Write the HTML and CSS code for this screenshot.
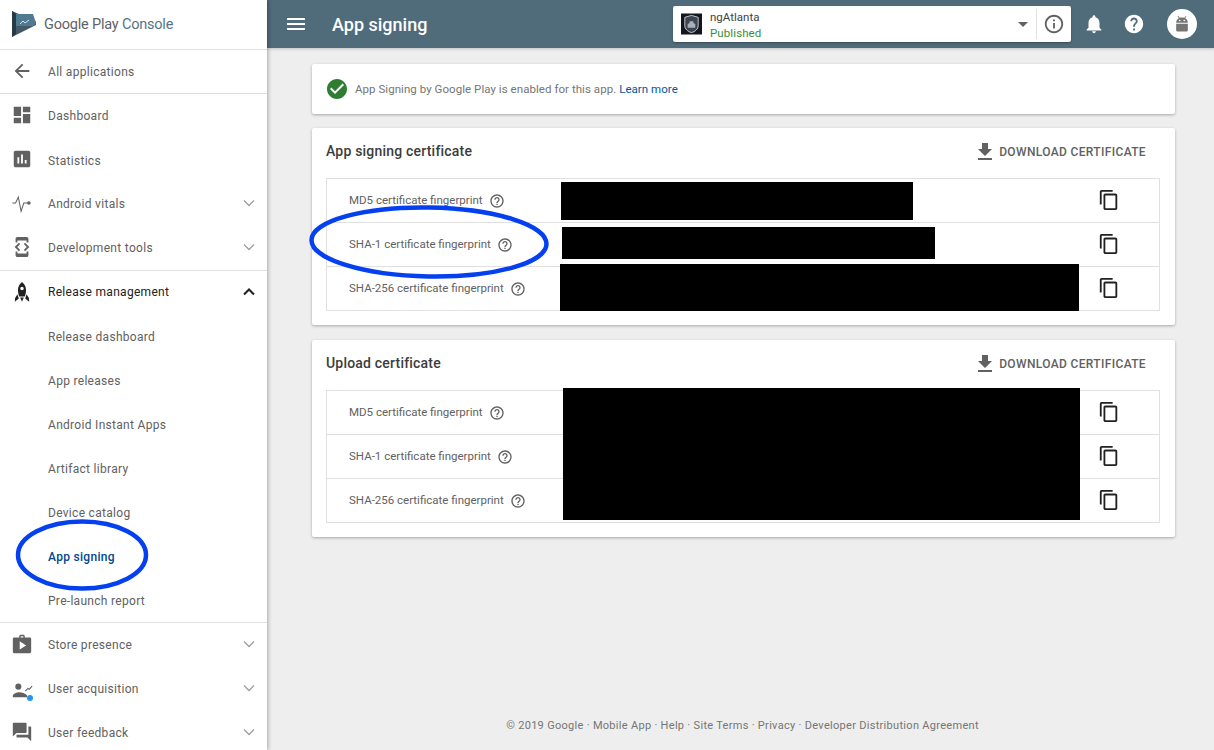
FILE: index.html
```html
<!DOCTYPE html>
<html lang="en">
<head>
    <meta charset="UTF-8">
    <meta name="viewport" content="width=device-width, initial-scale=1.0">
    <title>App signing - Google Play Console</title>
    <link rel="stylesheet" href="styles.css">
</head>
<body>
    <svg class="sprite" xmlns="http://www.w3.org/2000/svg">
        <symbol id="i-back" viewBox="0 0 24 24"><path d="M20 11H7.830l5.590-5.590L12 4l-8 8 8 8 1.410-1.410L7.830 13H20v-2z"/></symbol>
        <symbol id="i-dashboard" viewBox="0 0 24 24"><path d="M3 13h8V3H3v10zm0 8h8v-6H3v6zm10 0h8V11h-8v10zm0-18v6h8V3h-8z"/></symbol>
        <symbol id="i-stats" viewBox="0 0 24 24"><path d="M19 3H5c-1.100 0-2 .9-2 2v14c0 1.100.9 2 2 2h14c1.100 0 2-.9 2-2V5c0-1.100-.9-2-2-2zM9 17H7v-7h2v7zm4 0h-2V7h2v10zm4 0h-2v-4h2v4z"/></symbol>
        <symbol id="i-vitals" viewBox="0 0 24 24"><path d="M1.500 12H5l3-6.500L11 21l3-9h4" fill="none" stroke="currentColor" stroke-width="1.100"/><circle cx="19.500" cy="12" r="2"/></symbol>
        <symbol id="i-dev" viewBox="0 0 24 24"><path d="M7 5h10v2h2V3c0-1.100-.9-1.990-2-1.990L7 1c-1.100 0-2 .9-2 2v4h2V5zm8.410 11.590L20 12l-4.590-4.590L14 8.830 17.170 12 14 15.170l1.410 1.420zM10 15.170L6.830 12 10 8.830 8.590 7.410 4 12l4.590 4.590L10 15.170zM17 19H7v-2H5v4c0 1.100.9 2 2 2h10c1.100 0 2-.9 2-2v-4h-2v2z"/></symbol>
        <symbol id="i-rocket" viewBox="0 0 24 24"><path d="M12 1C9.200 3.300 7.600 6.300 7.600 9.800c0 2.700.6 5.400 1.400 7.200h6c.8-1.800 1.400-4.500 1.400-7.200C16.400 6.300 14.800 3.300 12 1zm0 9.200a1.900 1.900 0 1 1 0-3.800 1.900 1.900 0 0 1 0 3.800zM7 14.500 4.500 18.500l-.3 4L8.500 19zM17 14.500l2.500 4 .3 4-4.300-3.500zM10 18h4l-2 4.500z"/></symbol>
        <symbol id="i-store" viewBox="0 0 24 24"><path d="M15 5V3.500C15 2.670 14.330 2 13.500 2h-3C9.670 2 9 2.670 9 3.500V5H3.500C2.670 5 2 5.670 2 6.500v14c0 .83.67 1.500 1.500 1.500h17c.83 0 1.500-.67 1.500-1.500v-14c0-.83-.67-1.500-1.500-1.500H15zM10.500 3.500h3V5h-3V3.500zM9.500 18v-9l7 4.500-7 4.500z"/></symbol>
        <symbol id="i-users" viewBox="0 0 24 24"><circle cx="8" cy="10.500" r="3.300"/><path d="M2 22v-1.500c0-2.500 4.500-4 7-4s6.500 1 8.500 3.500V22z"/><path d="M15.500 15.500l3-3 1.500 1 3-3.500" fill="none" stroke="currentColor" stroke-width="1.200"/></symbol>
        <symbol id="i-forum" viewBox="0 0 24 24"><path d="M21 6h-2v9H6v2c0 .55.45 1 1 1h11l4 4V7c0-.55-.45-1-1-1zm-4 6V3c0-.55-.45-1-1-1H3c-.55 0-1 .45-1 1v14l4-4h10c.55 0 1-.45 1-1z"/></symbol>
        <symbol id="i-chev" viewBox="0 0 24 24"><path d="M6 9l6 6 6-6" fill="none" stroke="currentColor"/></symbol>
        <symbol id="i-menu" viewBox="0 0 24 24"><path d="M3 18h18v-2H3v2zm0-5h18v-2H3v2zm0-7v2h18V6H3z"/></symbol>
        <symbol id="i-info" viewBox="0 0 24 24"><path d="M11 17h2v-6h-2v6zm1-15C6.480 2 2 6.480 2 12s4.480 10 10 10 10-4.480 10-10S17.520 2 12 2zm0 18c-4.410 0-8-3.590-8-8s3.590-8 8-8 8 3.590 8 8-3.590 8-8 8zM11 9h2V7h-2v2z"/></symbol>
        <symbol id="i-bell" viewBox="0 0 24 24"><path d="M12 22c1.100 0 2-.9 2-2h-4c0 1.100.9 2 2 2zm6-6v-5c0-3.070-1.630-5.640-4.500-6.320V4c0-.83-.67-1.500-1.500-1.500s-1.500.67-1.500 1.500v.68C7.640 5.360 6 7.920 6 11v5l-2 2v1h16v-1l-2-2z"/></symbol>
        <symbol id="i-help" viewBox="0 0 24 24"><path d="M12 2C6.480 2 2 6.480 2 12s4.480 10 10 10 10-4.480 10-10S17.520 2 12 2zm1 17h-2v-2h2v2zm2.070-7.750l-.9.920C13.450 12.900 13 13.500 13 15h-2v-.5c0-1.100.45-2.100 1.170-2.830l1.240-1.260c.37-.36.590-.86.590-1.410 0-1.100-.9-2-2-2s-2 .9-2 2H8c0-2.210 1.790-4 4-4s4 1.790 4 4c0 .88-.36 1.680-.93 2.250z"/></symbol>
        <symbol id="i-help-o" viewBox="0 0 24 24"><path d="M11 18h2v-2h-2v2zm1-16C6.480 2 2 6.480 2 12s4.480 10 10 10 10-4.480 10-10S17.520 2 12 2zm0 18c-4.410 0-8-3.590-8-8s3.590-8 8-8 8 3.590 8 8-3.590 8-8 8zm0-14c-2.210 0-4 1.790-4 4h2c0-1.100.9-2 2-2s2 .9 2 2c0 2-3 1.750-3 5h2c0-2.250 3-2.500 3-5 0-2.210-1.790-4-4-4z"/></symbol>
        <symbol id="i-check" viewBox="0 0 24 24"><path d="M12 2C6.480 2 2 6.480 2 12s4.480 10 10 10 10-4.480 10-10S17.520 2 12 2zm-2 15l-5-5 1.410-1.410L10 14.170l7.590-7.590L19 8l-9 9z"/></symbol>
        <symbol id="i-download" viewBox="0 0 24 24"><path d="M19 9h-4V3H9v6H5l7 7 7-7zM5 18v2h14v-2H5z"/></symbol>
        <symbol id="i-copy" viewBox="0 0 24 24"><path d="M16 1H4c-1.100 0-2 .9-2 2v14h2V3h12V1zm3 4H8c-1.100 0-2 .9-2 2v14c0 1.100.9 2 2 2h11c1.100 0 2-.9 2-2V7c0-1.100-.9-2-2-2zm0 16H8V7h11v14z"/></symbol>
    </svg>

    <div class="page">
        <aside class="sidebar">
            <div class="brand">
                <svg class="brand-logo" viewBox="0 0 24 26">
                    <path d="M0 0l24 10.500v3.500L0 26z" fill="#455a64"/>
                    <path d="M4 3h17l3 9-3 3H4z" fill="#4f7a91"/>
                    <path d="M0 0l4 3v20l-4 3z" fill="#263a46"/>
                    <path d="M8 13l3-3 2 2 4-3" fill="none" stroke="#cfe3ec" stroke-width="1"/>
                </svg>
                <span class="brand-name">Google Play <span class="brand-sub">Console</span></span>
            </div>
            <a class="nav-row nav-back"><svg class="nav-icon"><use href="#i-back"/></svg>All applications</a>
            <nav class="nav-group">
                <a class="nav-row"><svg class="nav-icon"><use href="#i-dashboard"/></svg>Dashboard</a>
                <a class="nav-row nav-low"><svg class="nav-icon"><use href="#i-stats"/></svg>Statistics</a>
                <a class="nav-row"><svg class="nav-icon"><use href="#i-vitals"/></svg>Android vitals<svg class="nav-chev"><use href="#i-chev"/></svg></a>
                <a class="nav-row"><svg class="nav-icon"><use href="#i-dev"/></svg>Development tools<svg class="nav-chev"><use href="#i-chev"/></svg></a>
            </nav>
            <nav class="nav-group">
                <a class="nav-row nav-open"><svg class="nav-icon"><use href="#i-rocket"/></svg>Release management<svg class="nav-chev nav-chev-up"><use href="#i-chev"/></svg></a>
                <a class="nav-row nav-low">Release dashboard</a>
                <a class="nav-row nav-low">App releases</a>
                <a class="nav-row nav-low">Android Instant Apps</a>
                <a class="nav-row nav-low">Artifact library</a>
                <a class="nav-row nav-low">Device catalog</a>
                <a class="nav-row nav-low nav-active">App signing</a>
                <a class="nav-row nav-low">Pre-launch report</a>
            </nav>
            <nav class="nav-group">
                <a class="nav-row"><svg class="nav-icon"><use href="#i-store"/></svg>Store presence<svg class="nav-chev"><use href="#i-chev"/></svg></a>
                <a class="nav-row"><svg class="nav-icon"><use href="#i-users"/></svg><span class="nav-badge"></span>User acquisition<svg class="nav-chev"><use href="#i-chev"/></svg></a>
                <a class="nav-row"><svg class="nav-icon"><use href="#i-forum"/></svg>User feedback<svg class="nav-chev"><use href="#i-chev"/></svg></a>
            </nav>
        </aside>

        <div class="content">
            <header class="topbar">
                <svg class="top-menu"><use href="#i-menu"/></svg>
                <h1 class="top-title">App signing</h1>
                <div class="app-picker">
                    <svg class="app-logo" viewBox="0 0 22 22">
                        <rect width="22" height="22" fill="#14161c"/>
                        <path d="M4 4l7-2 7 2v9c0 3-3 6-7 7-4-1-7-4-7-7z" fill="#3c4450" stroke="#c4c8cf" stroke-width="1"/>
                        <path d="M7 15v-4l2-1v-2h4v2l2 1v4z" fill="#aab0ba"/>
                    </svg>
                    <div class="app-info">
                        <div class="app-name">ngAtlanta</div>
                        <div class="app-status">Published</div>
                    </div>
                    <span class="app-caret"></span>
                    <span class="app-info-btn"><svg class="app-info-icon"><use href="#i-info"/></svg></span>
                </div>
                <svg class="top-icon top-bell"><use href="#i-bell"/></svg>
                <svg class="top-icon"><use href="#i-help"/></svg>
                <span class="avatar">
                    <svg viewBox="0 0 24 24" class="avatar-icon">
                        <path d="M5 10.500c0-2.700 1.300-4.600 3.200-5.500L6.600 2.500l.8-.5 1.700 2.600c.9-.3 1.900-.5 2.900-.5s2 .2 2.900.5L16.600 2l.8.5L15.800 5c1.900.9 3.200 2.800 3.200 5.500z"/>
                        <path d="M5 11.700h14v7.800c0 .8-.7 1.500-1.500 1.500h-11c-.8 0-1.500-.7-1.500-1.500z"/>
                        <circle cx="9.300" cy="7.800" r="1" fill="#fff"/>
                        <circle cx="14.700" cy="7.800" r="1" fill="#fff"/>
                    </svg>
                </span>
            </header>

            <main class="main">
                <section class="card notice">
                    <svg class="notice-icon"><use href="#i-check"/></svg>
                    <span>App Signing by Google Play is enabled for this app. <a class="link">Learn more</a></span>
                </section>

                <section class="card cert">
                    <div class="cert-head">
                        <h2 class="cert-title">App signing certificate</h2>
                        <a class="cert-download"><svg class="download-icon"><use href="#i-download"/></svg>DOWNLOAD CERTIFICATE</a>
                    </div>
                    <div class="cert-table">
                        <div class="cert-row"><span class="cert-label">MD5 certificate fingerprint</span><svg class="help-icon"><use href="#i-help-o"/></svg><svg class="copy-icon"><use href="#i-copy"/></svg></div>
                        <div class="cert-row"><span class="cert-label">SHA-1 certificate fingerprint</span><svg class="help-icon"><use href="#i-help-o"/></svg><svg class="copy-icon"><use href="#i-copy"/></svg></div>
                        <div class="cert-row"><span class="cert-label">SHA-256 certificate fingerprint</span><svg class="help-icon"><use href="#i-help-o"/></svg><svg class="copy-icon"><use href="#i-copy"/></svg></div>
                        <div class="redact redact-a1"></div>
                        <div class="redact redact-a2"></div>
                        <div class="redact redact-a3"></div>
                    </div>
                </section>

                <section class="card cert">
                    <div class="cert-head">
                        <h2 class="cert-title">Upload certificate</h2>
                        <a class="cert-download"><svg class="download-icon"><use href="#i-download"/></svg>DOWNLOAD CERTIFICATE</a>
                    </div>
                    <div class="cert-table">
                        <div class="cert-row"><span class="cert-label">MD5 certificate fingerprint</span><svg class="help-icon"><use href="#i-help-o"/></svg><svg class="copy-icon"><use href="#i-copy"/></svg></div>
                        <div class="cert-row"><span class="cert-label">SHA-1 certificate fingerprint</span><svg class="help-icon"><use href="#i-help-o"/></svg><svg class="copy-icon"><use href="#i-copy"/></svg></div>
                        <div class="cert-row"><span class="cert-label">SHA-256 certificate fingerprint</span><svg class="help-icon"><use href="#i-help-o"/></svg><svg class="copy-icon"><use href="#i-copy"/></svg></div>
                        <div class="redact redact-b"></div>
                    </div>
                </section>

                <footer class="footer">© 2019 Google · Mobile App · Help · Site Terms · Privacy · Developer Distribution Agreement</footer>
            </main>
        </div>
    </div>

    <!-- hand drawn circles on top of the screenshot -->
    <svg class="circle circle-nav" viewBox="0 0 134 72"><ellipse cx="67" cy="36" rx="64" ry="33.500" /></svg>
    <svg class="circle circle-sha" viewBox="0 0 242 76"><ellipse cx="121" cy="38" rx="117.500" ry="34.500" transform="rotate(1 121 38)" /></svg>
</body>
</html>
```

FILE: styles.css
```css
*{
    box-sizing: border-box;
    margin: 0;
    padding: 0;
}
html, body{
    height: 100%;
    overflow: hidden;
}
body{
    font-family: Roboto, "Liberation Sans", sans-serif;
    font-size: 12px;
    color: #616161;
    background: #eeeeee;
}
svg{
    fill: currentColor;
    flex: none;
}
.sprite{
    display: none;
}
.page{
    display: flex;
    height: 750px;
}

/* sidebar */
.sidebar{
    width: 267px;
    flex: none;
    background: #fff;
    box-shadow: 1px 0 4px rgba(0, 0, 0, .3);
    overflow: hidden;
    z-index: 2;
}
.brand{
    height: 50px;
    display: flex;
    align-items: center;
    padding-left: 12px;
    padding-bottom: 1px;
    border-bottom: 1px solid #e0e0e0;
}
.brand-logo{
    width: 24px;
    height: 26px;
    margin-right: 8px;
}
.brand-name{
    font-size: 14.500px;
    color: #5f6368;
    letter-spacing: -.2px;
}
.brand-sub{
    color: #557487;
}
.nav-row{
    height: 44px;
    display: flex;
    align-items: center;
    padding-left: 48px;
    padding-bottom: 1px;
    position: relative;
    letter-spacing: .3px;
    color: #616161;
}
.nav-low{
    padding-bottom: 0;
    padding-top: 1px;
}
.nav-back{
    border-bottom: 1px solid #e0e0e0;
    padding-bottom: 0;
}
.nav-group{
    border-bottom: 1px solid #e0e0e0;
}
.nav-group:last-child{
    border-bottom: 0;
}
.nav-icon{
    position: absolute;
    left: 11px;
    top: 10px;
    width: 22px;
    height: 22px;
    color: #616161;
}
.nav-chev{
    width: 20px;
    height: 20px;
    position: absolute;
    right: 8px;
    top: 11px;
    color: #9e9e9e;
    stroke-width: 1.500;
}
.nav-chev-up{
    transform: rotate(180deg);
    color: #212121;
    stroke-width: 2.500;
}
.nav-open{
    height: 43px;
    color: #212121;
}
.nav-open .nav-icon{
    color: #212121;
}
.nav-active{
    color: #01478f;
    font-weight: 500;
}
.nav-badge{
    position: absolute;
    left: 27px;
    top: 28px;
    width: 6px;
    height: 6px;
    border-radius: 50%;
    background: #2196f3;
}

/* top bar */
.content{
    flex: 1;
    min-width: 0;
    display: flex;
    flex-direction: column;
}
.topbar{
    height: 48px;
    flex: none;
    background: #506b7a;
    display: flex;
    align-items: center;
    color: #fff;
    box-shadow: 0 1px 3px rgba(0, 0, 0, .2);
}
.top-menu{
    width: 24px;
    height: 24px;
    margin-left: 17px;
}
.top-title{
    font-size: 18px;
    font-weight: 500;
    margin-left: 24px;
    width: 341px;
}
.app-picker{
    width: 398px;
    height: 36px;
    background: #fff;
    border-radius: 2px;
    box-shadow: 0 1px 2px rgba(0, 0, 0, .3);
    display: flex;
    align-items: center;
    padding-left: 8px;
    color: #424242;
}
.app-logo{
    width: 21px;
    height: 22px;
}
.app-info{
    margin-left: 8px;
    font-size: 11.500px;
    line-height: 16px;
    padding-top: 2px;
    flex: 1;
}
.app-status{
    color: #388e3c;
    letter-spacing: .1px;
}
.app-caret{
    border-left: 5.500px solid transparent;
    border-right: 5.500px solid transparent;
    border-top: 5.500px solid #616161;
    margin-right: 8px;
}
.app-info-btn{
    width: 35px;
    height: 30px;
    border-left: 1px solid #e0e0e0;
    display: flex;
    align-items: center;
    justify-content: center;
}
.app-info-icon{
    width: 22px;
    height: 22px;
    color: #616161;
}
.top-icon{
    width: 22px;
    height: 22px;
    margin-left: 11px;
    margin-right: 7px;
}
.top-bell{
    margin-left: 12px;
}
.avatar{
    width: 30px;
    height: 30px;
    border-radius: 50%;
    background: #fff;
    display: flex;
    align-items: center;
    justify-content: center;
    margin-left: 15px;
    color: #757575;
}
.avatar-icon{
    width: 20px;
    height: 20px;
}

/* main column */
.main{
    flex: 1;
    display: flex;
    flex-direction: column;
    padding: 16px 39px 0 45px;
}
.card{
    background: #fff;
    border-radius: 2px;
    box-shadow: 0 1px 3px rgba(0, 0, 0, .3);
    margin-bottom: 15px;
}
.notice{
    height: 50px;
    margin-bottom: 14px;
    display: flex;
    align-items: center;
    padding-left: 13px;
    font-size: 11.500px;
    letter-spacing: .05px;
    color: #757575;
}
.notice-icon{
    width: 24px;
    height: 24px;
    color: #2e7d32;
    margin-right: 6px;
}
.link{
    color: #01579b;
}
.cert{
    height: 197px;
    padding: 0 15px 0 14px;
}
.cert-head{
    height: 50px;
    display: flex;
    align-items: center;
    justify-content: space-between;
    padding-bottom: 4px;
}
.cert-title{
    font-size: 14px;
    font-weight: 500;
    color: #3c3c3c;
    letter-spacing: .2px;
}
.cert-download{
    display: flex;
    align-items: center;
    font-size: 12px;
    font-weight: 500;
    letter-spacing: .35px;
    color: #616161;
    margin-right: 14px;
    margin-top: 2px;
}
.download-icon{
    width: 24px;
    height: 24px;
    margin-right: 2px;
}
.cert-table{
    position: relative;
    border: 1px solid #e0e0e0;
}
.cert-row{
    height: 44px;
    display: flex;
    align-items: center;
    padding-left: 22px;
    padding-right: 39px;
    font-size: 11.500px;
    color: #616161;
    border-bottom: 1px solid #e0e0e0;
}
.cert-row:nth-child(3){
    height: 43px;
    border-bottom: 0;
}
.cert-label{
    margin-bottom: 2px;
}
.help-icon{
    width: 16px;
    height: 16px;
    margin-left: 6px;
}
.copy-icon{
    width: 22px;
    height: 22px;
    margin-left: auto;
    margin-bottom: 2px;
    color: #212121;
}

/* blacked out fingerprints */
.redact{
    position: absolute;
    background: #000;
}
.redact-a1{
    left: 234px;
    top: 3px;
    width: 352px;
    height: 38px;
}
.redact-a2{
    left: 235px;
    top: 48px;
    width: 373px;
    height: 32px;
}
.redact-a3{
    left: 233px;
    top: 85px;
    width: 519px;
    height: 47px;
}
.redact-b{
    left: 236px;
    top: -3px;
    width: 517px;
    height: 132px;
}
.footer{
    margin-top: auto;
    padding-bottom: 18px;
    padding-right: 2px;
    text-align: center;
    font-size: 11px;
    letter-spacing: .3px;
    color: #757575;
}

/* blue pen circles */
.circle{
    position: absolute;
    fill: none;
    stroke: #0440f0;
    stroke-width: 4.500;
    z-index: 5;
}
.circle-nav{
    left: 15px;
    top: 519px;
    width: 134px;
    height: 72px;
}
.circle-sha{
    left: 308px;
    top: 204px;
    width: 242px;
    height: 76px;
}
```
